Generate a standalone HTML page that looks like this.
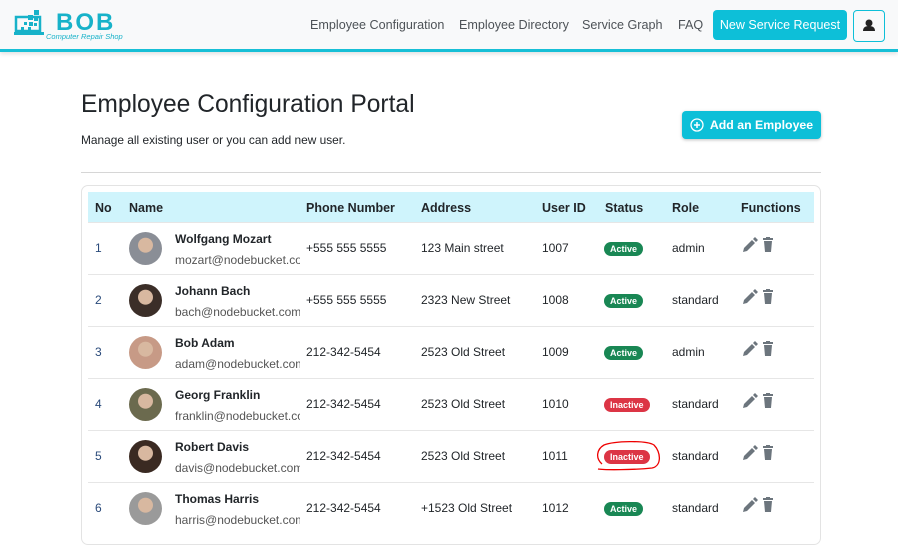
<!DOCTYPE html>
<html><head><style>
*{box-sizing:border-box;margin:0;padding:0}
body{width:898px;height:530px;overflow:hidden;background:#fff;font-family:"Liberation Sans",sans-serif;color:#212529;position:relative}
.nav{position:absolute;left:0;top:0;width:898px;height:52px;background:#f8f9fa;border-bottom:3px solid #17bfd6;box-shadow:0 2px 4px rgba(0,0,0,.12)}
.logo{position:absolute;left:14px;top:8px}
.navlinks{position:absolute;top:18px;font-size:12.6px;color:#4d5257}
.btn{position:absolute;background:#0dbfd8;color:#fff;border-radius:4px;font-size:12.5px;display:flex;align-items:center;justify-content:center}
h1{position:absolute;left:81px;top:91px;font-size:24.6px;font-weight:normal;color:#212529}
.sub{position:absolute;left:81px;top:133px;font-size:11.9px}
.hr{position:absolute;left:81px;top:172px;width:740px;height:1px;background:#d6d6d6}
.card{position:absolute;left:81px;top:185px;width:740px;height:360px;border:1px solid #e3e3e3;border-radius:7px}
.th{position:absolute;left:88px;top:192px;width:726px;height:31px;background:#cff4fc;border-bottom:1px solid #b7dbe3}
.c{position:absolute;font-size:12px;white-space:nowrap}
.h{font-weight:bold;top:201px;font-size:12.5px}
.row{position:absolute;left:88px;width:726px;height:1px;background:#e6e6e6}
.av{position:absolute;left:129px;width:33px;height:33px;border-radius:50%}
.badge{position:absolute;left:604px;height:14px;border-radius:7px;color:#fff;font-size:9px;font-weight:bold;padding:0 6px;line-height:14px}
</style></head><body>
<div class="nav">
<svg class="logo" width="115" height="34" viewBox="0 0 115 34">
<rect x="2" y="9" width="24" height="14" fill="none" stroke="#17b2c9" stroke-width="2.5"/>
<rect x="0" y="24" width="30" height="3" fill="#17b2c9"/>
<rect x="20" y="2" width="5" height="5" fill="#17b2c9"/><rect x="14" y="7" width="5" height="5" fill="#17b2c9"/><rect x="20" y="9" width="4" height="4" fill="#17b2c9"/><rect x="10" y="14" width="3" height="3" fill="#17b2c9"/><rect x="15" y="14" width="4" height="4" fill="#17b2c9"/><rect x="20" y="15" width="3" height="3" fill="#17b2c9"/><rect x="14" y="19" width="3" height="3" fill="#17b2c9"/><rect x="7" y="19" width="3" height="3" fill="#17b2c9"/>
<text x="42" y="22" font-family="Liberation Sans" font-weight="bold" font-size="24" fill="#17b2c9" letter-spacing="2">BOB</text>
<text x="32" y="31" font-family="Liberation Sans" font-style="italic" font-size="7.5" fill="#17b2c9">Computer Repair Shop</text>
</svg>
<div class="navlinks" style="left:310px">Employee Configuration</div>
<div class="navlinks" style="left:459px">Employee Directory</div>
<div class="navlinks" style="left:582px">Service Graph</div>
<div class="navlinks" style="left:678px">FAQ</div>
<div class="btn" style="left:713px;top:10px;width:134px;height:30px">New Service Request</div>
<div style="position:absolute;left:853px;top:10px;width:32px;height:32px;border:1px solid #0dbfd8;border-radius:4px"><svg width="30" height="30" viewBox="0 0 30 30"><circle cx="15" cy="12" r="3.5" fill="#222"/><path d="M9 20c0-4 3-5 6-5s6 1 6 5z" fill="#222"/></svg></div>
</div>
<h1>Employee Configuration Portal</h1>
<div class="sub">Manage all existing user or you can add new user.</div>
<div class="btn" style="left:682px;top:111px;width:139px;height:28px;font-weight:bold;font-size:12.3px;box-shadow:0 1px 3px rgba(0,0,0,.25)"><svg width="14" height="14" viewBox="0 0 14 14" style="margin-right:6px"><circle cx="7" cy="7" r="6" fill="none" stroke="#fff" stroke-width="1.3"/><path d="M7 4v6M4 7h6" stroke="#fff" stroke-width="1.5"/></svg>Add an Employee</div>
<div class="hr"></div>
<div class="card"></div>
<div class="th"></div>
<div class="c h" style="left:95px">No</div><div class="c h" style="left:129px">Name</div><div class="c h" style="left:306px">Phone Number</div><div class="c h" style="left:421px">Address</div><div class="c h" style="left:542px">User ID</div><div class="c h" style="left:605px">Status</div><div class="c h" style="left:672px">Role</div><div class="c h" style="left:741px">Functions</div>

<div id="rows"></div>
<script>
var d=[["1","Wolfgang Mozart","mozart","+555 555 5555","123 Main street","1007",1,"admin","#8a8e96"],
["2","Johann Bach","bach","+555 555 5555","2323 New Street","1008",1,"standard","#3b2e28"],
["3","Bob Adam","adam","212-342-5454","2523 Old Street","1009",1,"admin","#c79a86"],
["4","Georg Franklin","franklin","212-342-5454","2523 Old Street","1010",0,"standard","#6b6a4e"],
["5","Robert Davis","davis","212-342-5454","2523 Old Street","1011",0,"standard","#3a2a22"],
["6","Thomas Harris","harris","212-342-5454","+1523 Old Street","1012",1,"standard","#9a9a9a"]];
var h="";
d.forEach(function(r,i){var y=248+i*52;
h+='<div class="row" style="top:'+(y-26)+'px"></div>';
h+='<div class="c" style="left:95px;top:'+(y-7)+'px;color:#2a4a7a">'+r[0]+'</div>';
h+='<div class="av" style="top:'+(y-16)+'px;background:radial-gradient(circle at 50% 40%,#d8b8a0 0 28%,'+r[8]+' 30%)"></div>';
h+='<div class="c" style="left:175px;top:'+(y-16)+'px;font-weight:bold">'+r[1]+'</div>';
h+='<div class="c" style="left:175px;top:'+(y+5)+'px;color:#555;width:125px;overflow:hidden">'+r[2]+'@nodebucket.com</div>';
h+='<div class="c" style="left:306px;top:'+(y-7)+'px">'+r[3]+'</div>';
h+='<div class="c" style="left:421px;top:'+(y-7)+'px">'+r[4]+'</div>';
h+='<div class="c" style="left:542px;top:'+(y-7)+'px">'+r[5]+'</div>';
h+='<div class="badge" style="top:'+(y-6)+'px;background:'+(r[6]?'#198754':'#dc3545')+'">'+(r[6]?'Active':'Inactive')+'</div>';
h+='<div class="c" style="left:672px;top:'+(y-7)+'px">'+r[7]+'</div>';
h+='<svg style="position:absolute;left:742px;top:'+(y-11)+'px" width="34" height="16" viewBox="0 0 34 16"><path d="M1 15l1-4 8-8 3 3-8 8z M11 2l2-2 3 3-2 2z" fill="#6c757d"/><rect x="21" y="1" width="10" height="2" fill="#6c757d"/><rect x="24" y="0" width="4" height="2" fill="#6c757d"/><path d="M22 4h8l-1 11h-6z" fill="#6c757d"/></svg>';
});
h+='<div class="row" style="top:482px"></div>';
document.getElementById("rows").innerHTML=h;
</script>
<svg style="position:absolute;left:594px;top:440px" width="70" height="34" viewBox="0 0 70 34"><path d="M4 29C10 30 40 30 58 28C68 26 67 12 60 5C52 0 20 1 10 5C3 9 1 18 8 24" fill="none" stroke="#e00" stroke-width="1.3"/></svg>
</body></html>
